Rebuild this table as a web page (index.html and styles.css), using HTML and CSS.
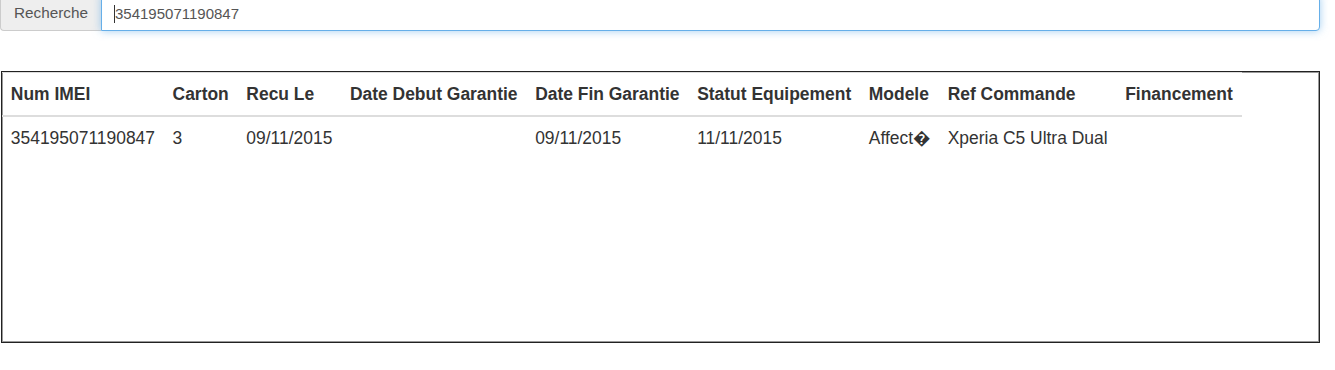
FILE: index.html
```html
<!DOCTYPE html>
<html lang="fr">
<head>
<meta charset="utf-8">
<title>Recherche IMEI</title>
<link rel="stylesheet" href="styles.css">
</head>
<body>
<div class="page">
  <div class="input-group">
    <span class="addon">Recherche</span>
    <div class="field">
      <input class="search" type="text" value="354195071190847">
      <span class="caret"></span>
    </div>
  </div>
  <div class="result-box">
    <table class="table">
      <thead>
        <tr>
          <th>Num IMEI</th>
          <th>Carton</th>
          <th>Recu Le</th>
          <th>Date Debut Garantie</th>
          <th>Date Fin Garantie</th>
          <th>Statut Equipement</th>
          <th>Modele</th>
          <th>Ref Commande</th>
          <th>Financement</th>
        </tr>
      </thead>
      <tbody>
        <tr>
          <td>354195071190847</td>
          <td>3</td>
          <td>09/11/2015</td>
          <td></td>
          <td>09/11/2015</td>
          <td>11/11/2015</td>
          <td>Affect&#xFFFD;</td>
          <td>Xperia C5 Ultra Dual</td>
          <td></td>
        </tr>
      </tbody>
    </table>
  </div>
</div>
</body>
</html>
```

FILE: styles.css
```css
html, body {
  margin: 0;
  padding: 0;
  background: #fff;
}

body {
  font-family: "Liberation Sans", Arial, Helvetica, sans-serif;
  color: #333;
  overflow: hidden;
}

.page {
  width: 1320px;
  margin-top: -5px;
}

.input-group {
  display: flex;
  height: 36px;
  font-size: 15px;
}

.addon {
  display: flex;
  align-items: center;
  box-sizing: border-box;
  width: 101px;
  padding: 0 12px 0 13px;
  font-size: 15.3px;
  background: #eee;
  border: 1px solid #ccc;
  border-right: 0;
  border-radius: 4px 0 0 4px;
  color: #555;
}

.field {
  position: relative;
  flex: 1;
  display: flex;
}

.search {
  flex: 1;
  box-sizing: border-box;
  margin: 0;
  height: 36px;
  padding: 0 12px 0 13px;
  font: inherit;
  color: #555;
  background: #fff;
  border: 1px solid #66afe9;
  border-radius: 0 4px 4px 0;
  outline: none;
  box-shadow: inset 0 1px 1px rgba(0, 0, 0, .075), 0 0 8px rgba(102, 175, 233, .6);
}

.caret {
  position: absolute;
  left: 13px;
  top: 10px;
  width: 1px;
  height: 18px;
  background: #333;
}

.result-box {
  box-sizing: border-box;
  margin: 40px 0 0 1px;
  width: 1319px;
  height: 272px;
  border: 1px solid #222;
  box-shadow: inset 1px 1px 0 #9a9a9a, inset -1px -1px 0 #9a9a9a;
  overflow: hidden;
}

.table {
  border-collapse: collapse;
  border-spacing: 0;
  font-size: 17.45px;
  line-height: 25px;
}

.table th,
.table td {
  padding: 8.6px 8.8px;
  text-align: left;
  white-space: nowrap;
  vertical-align: top;
}

.table th {
  font-weight: bold;
  border-top: 1px solid #ddd;
  border-bottom: 2px solid #ddd;
}
```
